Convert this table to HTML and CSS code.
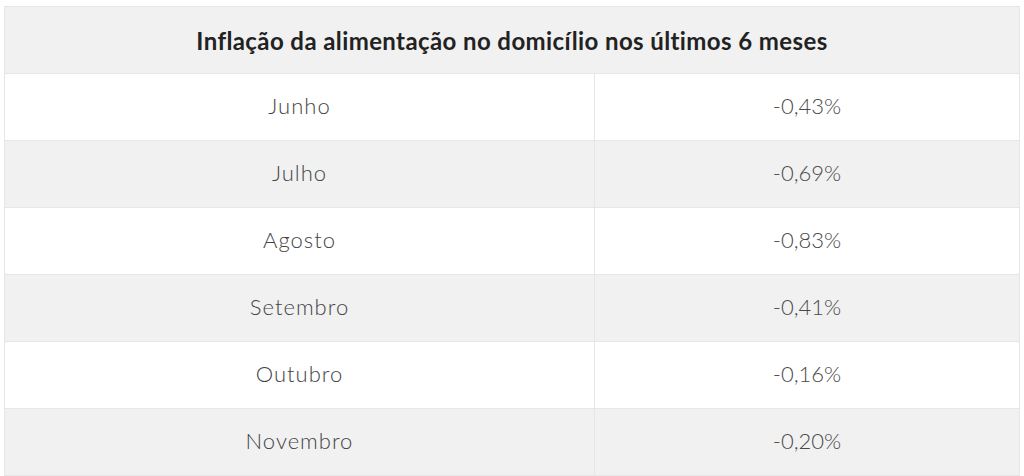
FILE: index.html
```html
<!DOCTYPE html>
<html lang="pt-BR">
<head>
<meta charset="utf-8">
<link rel="stylesheet" href="styles.css">
</head>
<body>
<div class="wrap">
<table class="infl">
  <thead>
    <tr><th colspan="2">Inflação da alimentação no domicílio nos últimos 6 meses</th></tr>
  </thead>
  <tbody>
    <tr><td class="month">Junho</td><td class="val">-0,43%</td></tr>
    <tr><td class="month">Julho</td><td class="val">-0,69%</td></tr>
    <tr><td class="month">Agosto</td><td class="val">-0,83%</td></tr>
    <tr><td class="month">Setembro</td><td class="val">-0,41%</td></tr>
    <tr><td class="month">Outubro</td><td class="val">-0,16%</td></tr>
    <tr><td class="month">Novembro</td><td class="val">-0,20%</td></tr>
  </tbody>
</table>
</div>
</body>
</html>
```
FILE: styles.css
```css
html, body { margin: 0; padding: 0; background: #fff; }
.wrap { padding: 6px 4px 0 4px; }
.infl {
  width: 1016px;
  border-collapse: collapse;
  font-family: Lato, "Open Sans", sans-serif;
}
.infl th {
  height: 66px;
  background: #f1f1f1;
  color: #222;
  font-weight: 700;
  font-size: 24px;
  letter-spacing: 0.4px;
  text-align: center;
  border: 1px solid #e6e6e6;
  padding: 0;
}
.infl td {
  height: 63px;
  padding: 0 0 3px 0;
  text-align: center;
  font-size: 22px;
  font-weight: 300;
  color: #444;
  border: 1px solid #e6e6e6;
}
.infl td.month { width: 589px; letter-spacing: 1px; }
.infl td.val { color: #4a4a4a; }
.infl tbody tr:nth-child(even) td { background: #f1f1f1; }
.infl tbody tr:nth-child(odd) td { background: #fff; }
```
